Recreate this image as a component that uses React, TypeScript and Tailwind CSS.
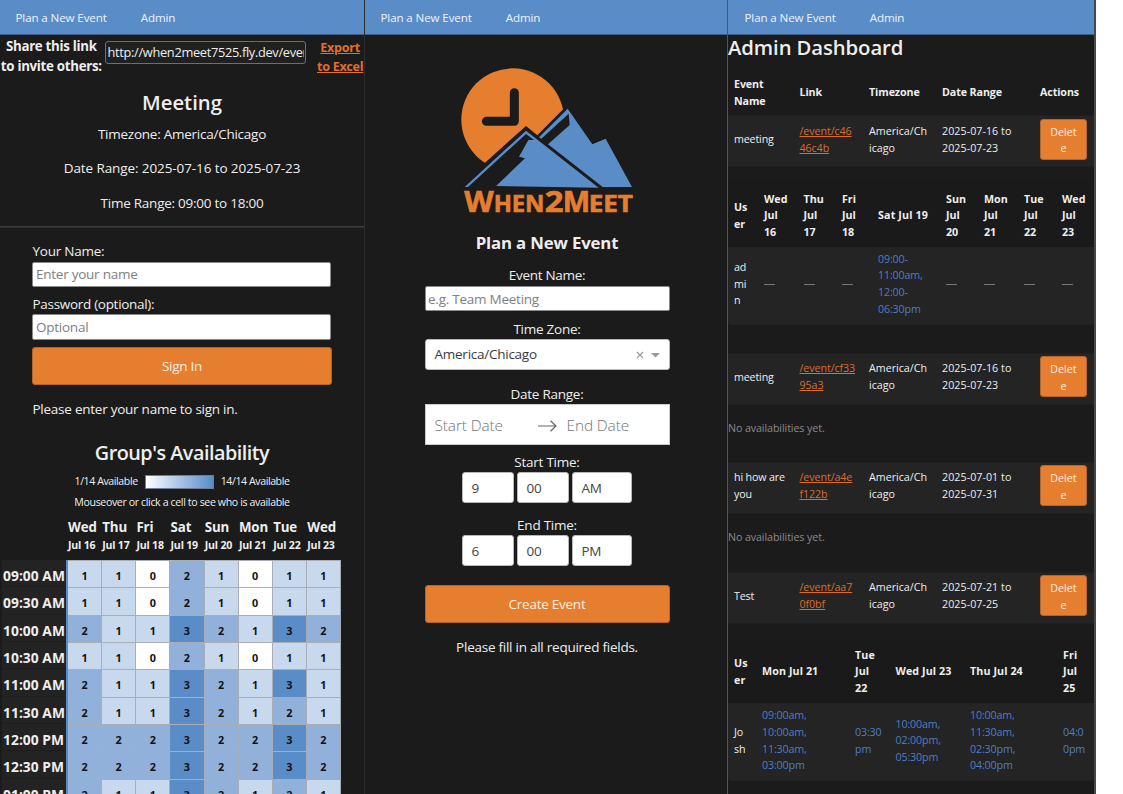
import React from "react";

function NavBar({ pad }: { pad: string }) {
  return (
    <nav
      className={
        "flex h-[35px] shrink-0 items-center gap-[34px] border-b border-[#3d5f8a] bg-[#5a8cc8] pt-[2px] text-[11.6px] tracking-[-0.12px] text-[#eef3fa] " +
        pad
      }
    >
      <span>Plan a New Event</span>
      <span>Admin</span>
    </nav>
  );
}

const days = [
  ["Wed", "Jul 16"],
  ["Thu", "Jul 17"],
  ["Fri", "Jul 18"],
  ["Sat", "Jul 19"],
  ["Sun", "Jul 20"],
  ["Mon", "Jul 21"],
  ["Tue", "Jul 22"],
  ["Wed", "Jul 23"],
];

const slots: [string, number[]][] = [
  ["09:00 AM", [1, 1, 0, 2, 1, 0, 1, 1]],
  ["09:30 AM", [1, 1, 0, 2, 1, 0, 1, 1]],
  ["10:00 AM", [2, 1, 1, 3, 2, 1, 3, 2]],
  ["10:30 AM", [1, 1, 0, 2, 1, 0, 1, 1]],
  ["11:00 AM", [2, 1, 1, 3, 2, 1, 3, 1]],
  ["11:30 AM", [2, 1, 1, 3, 2, 1, 2, 1]],
  ["12:00 PM", [2, 2, 2, 3, 2, 2, 3, 2]],
  ["12:30 PM", [2, 2, 2, 3, 2, 2, 3, 2]],
  ["01:00 PM", [2, 1, 1, 3, 2, 1, 2, 1]],
];

const shade = ["bg-white", "bg-[#c8d8ed]", "bg-[#91b0da]", "bg-[#5a8cc8]"];

function MeetingPanel() {
  return (
    <section className="flex h-full w-[365px] shrink-0 flex-col overflow-hidden border-r border-[#2c2c2c]">
      <NavBar pad="pl-[15.5px]" />
      <div className="flex h-[55px] shrink-0 items-start pt-[1px]">
        <div className="w-[103px] whitespace-nowrap text-center text-[13.3px] font-bold leading-[20px] tracking-[-0.3px]">
          Share this link
          <br />
          to invite others:
        </div>
        <div className="ml-[2px] mt-[5px] h-[23px] w-[202px] overflow-hidden whitespace-nowrap rounded-[3px] border border-[#4a76b0] bg-[#202020] pl-[2px] pr-[1px] text-[12.8px] leading-[21px] tracking-[-0.32px]">
          <div className="overflow-hidden">http://when2meet7525.fly.dev/event/c4646c4b</div>
        </div>
        <div className="ml-[10.5px] mt-[2px] w-[48px] whitespace-nowrap text-center text-[12.6px] font-bold leading-[19px] tracking-[-0.3px] text-[#e0702a] underline">
          Export
          <br />
          to Excel
        </div>
      </div>
      <h2 className="h-[27px] shrink-0 text-center text-[20.3px] font-semibold leading-[24px] tracking-[0px]">
        Meeting
      </h2>
      <div className="h-[109px] shrink-0 text-center text-[13.5px] leading-[34.4px] tracking-[-0.25px]">
        <p>Timezone: America/Chicago</p>
        <p className="tracking-[-0.1px]">Date Range: 2025-07-16 to 2025-07-23</p>
        <p>Time Range: 09:00 to 18:00</p>
      </div>
      <div className="h-[2px] shrink-0 border-b border-[#2c2c2c] bg-[#3c3c3c]" />
      <div className="flex shrink-0 flex-col px-[32px] pt-[14px] text-[13.5px] tracking-[-0.25px]">
        <label className="h-[20px] pl-[0.5px] leading-[19px]">Your Name:</label>
        <div className="h-[25px] w-[299px] rounded-[2px] border border-[#8a8a8a] bg-white pl-[3px] leading-[23px] text-[#808080]">
          Enter your name
        </div>
        <label className="mt-[7px] h-[20px] pl-[0.5px] leading-[21px] tracking-[-0.3px]">Password (optional):</label>
        <div className="h-[26px] w-[299px] rounded-[2px] border border-[#8a8a8a] bg-white pl-[3px] leading-[25px] text-[#808080]">
          Optional
        </div>
        <div className="mt-[7px] h-[38px] rounded-[3px] border border-[#b5652a] bg-[#e67e30] text-center leading-[37px] text-[#fbeee2]">
          Sign In
        </div>
        <p className="mt-[14px] h-[20px] pl-[0.5px] leading-[20px]">Please enter your name to sign in.</p>
      </div>
      <h2 className="mt-[20px] h-[28px] shrink-0 text-center text-[19.8px] font-semibold leading-[28px] tracking-[-0.5px]">
        Group's Availability
      </h2>
      <div className="mt-[6px] flex h-[18px] shrink-0 items-center justify-center gap-[7px] text-[10.6px] tracking-[-0.42px]">
        <span>1/14 Available</span>
        <span className="h-[14px] w-[69px] border border-[#6d7f98] bg-gradient-to-r from-white to-[#5a8cc8]" />
        <span>14/14 Available</span>
      </div>
      <p className="mt-[3px] h-[16px] shrink-0 text-center text-[10.6px] leading-[17px] tracking-[-0.37px]">
        Mouseover or click a cell to see who is available
      </p>
      <div className="mt-[9px] flex h-[41px] shrink-0 pl-[68px] font-bold">
        {days.map(([d, n]) => (
          <div key={n} className="w-[34.2px] shrink-0 whitespace-nowrap">
            <div className="text-[13.3px] leading-[17px] tracking-[-0.1px]">{d}</div>
            <div className="text-[10.6px] leading-[19px] tracking-[-0.2px]">{n}</div>
          </div>
        ))}
      </div>
      <div className="w-[341px] shrink-0 pl-[2px]">
        {slots.map(([time, vals]) => (
          <div key={time} className="flex h-[27.35px]">
            <div className="w-[64px] shrink-0 whitespace-nowrap border-b border-[#1e1e1e] bg-[#232323] pl-[1px] text-[13.8px] font-bold leading-[31px] tracking-[0.05px]">
              {time}
            </div>
            <div className="w-[2px] shrink-0 bg-[#5a8cc8]" />
            {vals.map((v, i) => (
              <div
                key={i}
                className={
                  "flex-1 border-r border-t border-[#a9adb5] text-center text-[10.8px] font-bold leading-[30px] text-[#111] " +
                  shade[v]
                }
              >
                {v}
              </div>
            ))}
          </div>
        ))}
      </div>
    </section>
  );
}

function Logo() {
  return (
    <svg viewBox="300 200 520 440" className="h-[146.67px] w-[173.33px]">
      <circle cx="458" cy="358" r="154" fill="#e67e30" />
      <path d="M463 277V363H379" fill="none" stroke="#1b1b1b" strokeWidth="27" strokeLinecap="round" strokeLinejoin="round" />
      <path d="M375 487L498 377L532 405L608 328L700 328V640H300V554Z" fill="#1b1b1b" />
      <path
        d="M314 560L498 391L716 562L408 557L495 474L477 469L505 419L522 419L498 401L324 560Z"
        fill="#5a8cc8"
      />
      <path
        d="M537 411L623 325L697 432L737 415L816 560H728L564 432L629 374L626 340L544 415Z"
        fill="#5a8cc8"
      />
      <g fill="#e67e30" fontWeight="700" fontFamily="'Open Sans', sans-serif" stroke="#e67e30" strokeWidth="2">
        <text x="313" y="635" fontSize="88" textLength="88" lengthAdjust="spacingAndGlyphs">W</text>
        <text x="401" y="635" fontSize="71" textLength="152" lengthAdjust="spacingAndGlyphs">HEN</text>
        <text x="554" y="635" fontSize="88" textLength="56" lengthAdjust="spacingAndGlyphs">2</text>
        <text x="608" y="635" fontSize="88" textLength="82" lengthAdjust="spacingAndGlyphs">M</text>
        <text x="686" y="635" fontSize="71" textLength="132" lengthAdjust="spacingAndGlyphs">EET</text>
      </g>
    </svg>
  );
}

function TimeRow({ values }: { values: string[] }) {
  return (
    <div className="flex justify-center gap-[3px] text-left text-[13.5px] leading-[31px] tracking-[-0.3px] text-[#444]">
      <div className="h-[31px] w-[52px] rounded-[3px] border border-[#b8b8b8] bg-white pl-[8.5px]">{values[0]}</div>
      <div className="h-[31px] w-[52px] rounded-[3px] border border-[#b8b8b8] bg-white pl-[8.5px]">{values[1]}</div>
      <div className="h-[31px] w-[60px] rounded-[3px] border border-[#b8b8b8] bg-white pl-[8.5px]">{values[2]}</div>
    </div>
  );
}

function PlanPanel() {
  return (
    <section className="flex h-full w-[362px] shrink-0 flex-col overflow-hidden">
      <NavBar pad="pl-[15.5px]" />
      <div className="flex flex-col pl-[59.5px] pr-[57.5px] text-center text-[13.5px] tracking-[-0.25px]">
        <div className="mt-[31.67px] flex h-[146.67px] justify-center">
          <Logo />
        </div>
        <h2 className="mt-[17px] h-[26px] text-[16.8px] font-bold leading-[26px] tracking-[-0.15px]">Plan a New Event</h2>
        <label className="mt-[10px] h-[20px] leading-[19px] tracking-[-0.3px]">Event Name:</label>
        <div className="h-[25px] rounded-[2px] border border-[#8a8a8a] bg-white pl-[2.5px] text-left leading-[24px] text-[#808080]">
          e.g. Team Meeting
        </div>
        <label className="mt-[7.5px] h-[20px] leading-[20px]">Time Zone:</label>
        <div className="flex h-[31px] items-center rounded-[3px] border border-[#b8b8b8] bg-white pl-[9px] pr-[9px] text-left text-[#3a3a3a]">
          <span className="flex-1">America/Chicago</span>
          <svg viewBox="0 0 8 8" className="mr-[7px] mt-[2px] h-[8px] w-[8px]">
            <path d="M1 1L7 7M7 1L1 7" stroke="#999" strokeWidth="1.1" />
          </svg>
          <svg viewBox="0 0 9 5" className="mt-[2px] h-[5px] w-[9px]">
            <path d="M0 0H9L4.5 4.5Z" fill="#999" />
          </svg>
        </div>
        <label className="mt-[14px] h-[20px] leading-[20px]">Date Range:</label>
        <div className="flex h-[41px] items-center border border-[#cacccd] bg-white pl-[9px] pt-[3px] text-left text-[15.4px] font-light tracking-[-0.1px] text-[#757575]">
          <span className="w-[103px]">Start Date</span>
          <svg viewBox="0 0 19 12" className="h-[12px] w-[19px]">
            <path d="M0 6H18M12.5 0.8L18 6L12.5 11.2" fill="none" stroke="#666" strokeWidth="1.2" />
          </svg>
          <span className="ml-[10px]">End Date</span>
        </div>
        <label className="mt-[7px] h-[20px] leading-[20px]">Start Time:</label>
        <TimeRow values={["9", "00", "AM"]} />
        <label className="mt-[12px] h-[20px] leading-[21px]">End Time:</label>
        <TimeRow values={["6", "00", "PM"]} />
        <div className="mt-[19px] h-[38px] rounded-[3px] border border-[#b5652a] bg-[#e67e30] leading-[36px] text-[#fbeee2]">
          Create Event
        </div>
        <p className="mt-[14px] h-[20px] leading-[20px]">Please fill in all required fields.</p>
      </div>
    </section>
  );
}

const eventCols = "grid grid-cols-[65.5px_69.5px_73px_98px_1fr] items-center pl-[6px]";
const weekCols = "grid grid-cols-[30px_39.5px_38.5px_36px_68px_38px_40px_38px_1fr] items-center pl-[6px]";
const shortCols = "grid grid-cols-[28px_93px_40.5px_74.5px_93px_1fr] items-center pl-[6px]";

function EventRow({ name, link, range }: { name: string[]; link: string[]; range: string[] }) {
  return (
    <div className={"h-[52px] shrink-0 border-y border-[#1f1f1f] bg-[#242424] pb-[3px] " + eventCols}>
      <Lines rows={name} />
      <div className="tracking-[-0.08px] text-[#dd6c2b] underline">
        <Lines rows={link} />
      </div>
      <div className="tracking-[0px]">
        <Lines rows={["America/Ch", "icago"]} />
      </div>
      <div className="tracking-[0.05px]">
        <Lines rows={range} />
      </div>
      <div className="mb-[1px] h-[41px] w-[47px] rounded-[3px] border border-[#b5652a] bg-[#e67e30] pt-[4px] text-center tracking-[0px] text-[#fbeee2]">
        <Lines rows={["Delet", "e"]} />
      </div>
    </div>
  );
}

function Lines({ rows }: { rows: string[] }) {
  return (
    <div className="whitespace-nowrap">
      {rows.map((r, i) => (
        <div key={i}>{r}</div>
      ))}
    </div>
  );
}

function AdminPanel() {
  const dash = <span className="mt-[1px] h-[1px] w-[11px] bg-[#777]" />;
  return (
    <section className="flex h-full w-[369px] shrink-0 flex-col overflow-hidden border-l border-r-2 border-l-[#555] border-r-[#484848] text-[10.7px] leading-[16.6px] tracking-[-0.15px]">
      <NavBar pad="pl-[16.5px]" />
      <h1 className="h-[33px] shrink-0 text-[20.3px] font-semibold leading-[25px] tracking-[-0.1px]">Admin Dashboard</h1>
      <div className={"h-[47px] shrink-0 pt-[2px] font-bold tracking-[-0.1px] " + eventCols}>
        <Lines rows={["Event", "Name"]} />
        <span>Link</span>
        <span>Timezone</span>
        <span>Date Range</span>
        <span>Actions</span>
      </div>
      <EventRow name={["meeting"]} link={["/event/c46", "46c4b"]} range={["2025-07-16 to", "2025-07-23"]} />
      <div className={"mt-[14px] h-[66px] shrink-0 bg-[#1a1a1a] pt-[3px] font-bold tracking-[0px] " + weekCols}>
        <Lines rows={["Us", "er"]} />
        <Lines rows={["Wed", "Jul", "16"]} />
        <Lines rows={["Thu", "Jul", "17"]} />
        <Lines rows={["Fri", "Jul", "18"]} />
        <div className="tracking-[0.15px]">
          <Lines rows={["Sat Jul 19"]} />
        </div>
        <Lines rows={["Sun", "Jul", "20"]} />
        <Lines rows={["Mon", "Jul", "21"]} />
        <Lines rows={["Tue", "Jul", "22"]} />
        <Lines rows={["Wed", "Jul", "23"]} />
      </div>
      <div className={"h-[78px] shrink-0 rounded-b-[4px] bg-[#242424] pb-[4px] " + weekCols}>
        <Lines rows={["ad", "mi", "n"]} />
        {dash}
        {dash}
        {dash}
        <div className="text-[#4d7ec2]">
          <Lines rows={["09:00-", "11:00am,", "12:00-", "06:30pm"]} />
        </div>
        {dash}
        {dash}
        {dash}
        {dash}
      </div>
      <div className="h-[27.5px] shrink-0" />
      <EventRow name={["meeting"]} link={["/event/cf33", "95a3"]} range={["2025-07-16 to", "2025-07-23"]} />
      <p className="h-[57px] shrink-0 pt-[15px] tracking-[-0.1px] text-[#8a8a8a]">No availabilities yet.</p>
      <EventRow name={["hi how are", "you"]} link={["/event/a4e", "f122b"]} range={["2025-07-01 to", "2025-07-31"]} />
      <p className="h-[58px] shrink-0 pt-[15px] tracking-[-0.1px] text-[#8a8a8a]">No availabilities yet.</p>
      <EventRow name={["Test"]} link={["/event/aa7", "0f0bf"]} range={["2025-07-21 to", "2025-07-25"]} />
      <div className={"mt-[14px] h-[65px] shrink-0 bg-[#1a1a1a] pt-[3px] font-bold tracking-[0.1px] " + shortCols}>
        <Lines rows={["Us", "er"]} />
        <Lines rows={["Mon Jul 21"]} />
        <Lines rows={["Tue", "Jul", "22"]} />
        <Lines rows={["Wed Jul 23"]} />
        <Lines rows={["Thu Jul 24"]} />
        <Lines rows={["Fri", "Jul", "25"]} />
      </div>
      <div className={"h-[78px] shrink-0 rounded-b-[4px] bg-[#242424] pb-[2px] text-[#4d7ec2] " + shortCols}>
        <div className="text-[#eee]">
          <Lines rows={["Jo", "sh"]} />
        </div>
        <Lines rows={["09:00am,", "10:00am,", "11:30am,", "03:00pm"]} />
        <Lines rows={["03:30", "pm"]} />
        <Lines rows={["10:00am,", "02:00pm,", "05:30pm"]} />
        <Lines rows={["10:00am,", "11:30am,", "02:30pm,", "04:00pm"]} />
        <Lines rows={["04:0", "0pm"]} />
      </div>
    </section>
  );
}

export default function App() {
  return (
    <div className="h-[794px] w-[1123px] overflow-hidden bg-white font-['Open_Sans','Noto_Sans',sans-serif] text-[#eeeeee]">
      <div className="flex h-full w-[1096px] bg-[#1b1b1b]">
        <MeetingPanel />
        <PlanPanel />
        <AdminPanel />
      </div>
    </div>
  );
}
